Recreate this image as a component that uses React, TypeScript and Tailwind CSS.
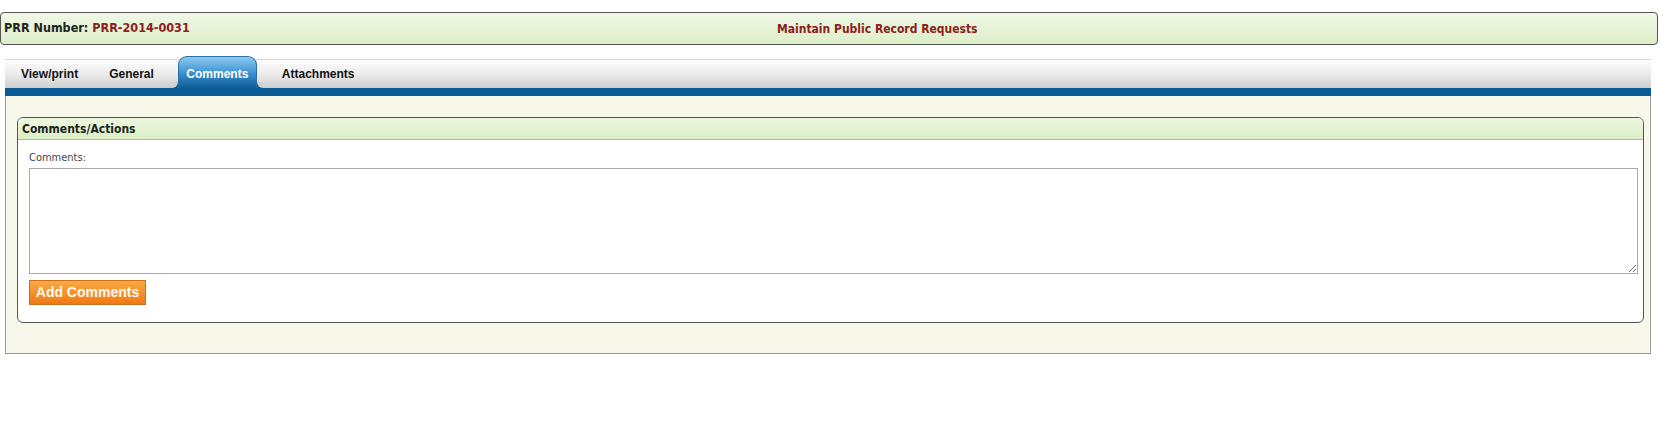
import React from "react";

const tahoma = { fontFamily: "'DejaVu Sans Condensed', Tahoma, Verdana, sans-serif" };
const arial = { fontFamily: "'Liberation Sans', Arial, sans-serif" };

function Tab({ label, className }: { label: string; className?: string }) {
  return (
    <div className={"flex h-[28px] items-center text-[12px] font-bold text-[#111] " + (className || "")} style={arial}>
      {label}
    </div>
  );
}

function ActiveTab({ label }: { label: string }) {
  return (
    <div className="relative ml-[24px] h-[32px] self-end">
      <span className="absolute bottom-0 left-[-6px] h-[6px] w-[6px] bg-[#0a5a96]">
        <span className="block h-[6px] w-[6px] rounded-br-[6px] bg-[#d2d2d2]" />
      </span>
      <span className="absolute bottom-0 right-[-6px] h-[6px] w-[6px] bg-[#0a5a96]">
        <span className="block h-[6px] w-[6px] rounded-bl-[6px] bg-[#d2d2d2]" />
      </span>
      <div
        className="flex h-[32px] w-[79px] items-center justify-center rounded-t-[9px] border border-b-0 border-[#2a6ea8] bg-gradient-to-b from-[#8acbf0] via-[#3f94d2] to-[#0b5c98] pt-[2px] text-[12px] font-bold text-white"
        style={arial}
      >
        {label}
      </div>
    </div>
  );
}

export default function App() {
  return (
    <div className="h-[431px] w-[1658px] bg-white">
      <div className="h-[12px]" />
      <div
        className="flex h-[33px] w-[1658px] items-center rounded-[4px] border border-[#555] bg-gradient-to-b from-[#eff8e6] to-[#ddefc8] text-[12.5px] font-bold"
        style={tahoma}
      >
        <div className="w-[776px] whitespace-nowrap pl-[3px]">
          <span className="text-[#222]">PRR Number: </span>
          <span className="text-[#8c2020]">PRR-2014-0031</span>
        </div>
        <div className="whitespace-nowrap text-[12px] text-[#8c2020]">Maintain Public Record Requests</div>
      </div>
      <div className="ml-[5px] mt-[14px] w-[1646px]">
        <div className="flex h-[29px] items-end border-t border-[#d8d8d8] bg-gradient-to-b from-[#fdfdfd] via-[#ececec] to-[#cfcfcf]">
          <Tab label="View/print" className="ml-[16px]" />
          <Tab label="General" className="ml-[31px]" />
          <ActiveTab label="Comments" />
          <Tab label="Attachments" className="ml-[25px]" />
        </div>
        <div className="h-[8px] bg-[#0a5a96]" />
        <div className="h-[258px] border-b border-l border-r border-[#9a9a9a] bg-[#f7f7ea] pl-[11px] pt-[21px]">
          <div className="h-[206px] w-[1627px] overflow-hidden rounded-[6px] border border-[#555] bg-white">
            <div
              className="flex h-[22px] items-center border-b border-[#a9bf8c] bg-gradient-to-b from-[#ecf7de] to-[#ddefc6] pl-[4px] text-[12px] font-bold text-[#222]"
              style={tahoma}
            >
              Comments/Actions
            </div>
            <div className="pl-[11px] pt-[11px]">
              <div className="text-[11px] leading-[13px] text-[#444]" style={tahoma}>
                Comments:
              </div>
              <textarea className="mt-[4px] block h-[106px] w-[1609px] resize-y border border-[#a9a9a9] bg-white outline-none" />
              <button
                className="mt-[6px] flex h-[25px] w-[117px] items-center justify-center border border-[#c8701a] bg-gradient-to-b from-[#fba842] to-[#ee7a10] text-[14px] font-bold text-[#fffaf0]"
                style={arial}
              >
                Add Comments
              </button>
            </div>
          </div>
        </div>
      </div>
    </div>
  );
}
